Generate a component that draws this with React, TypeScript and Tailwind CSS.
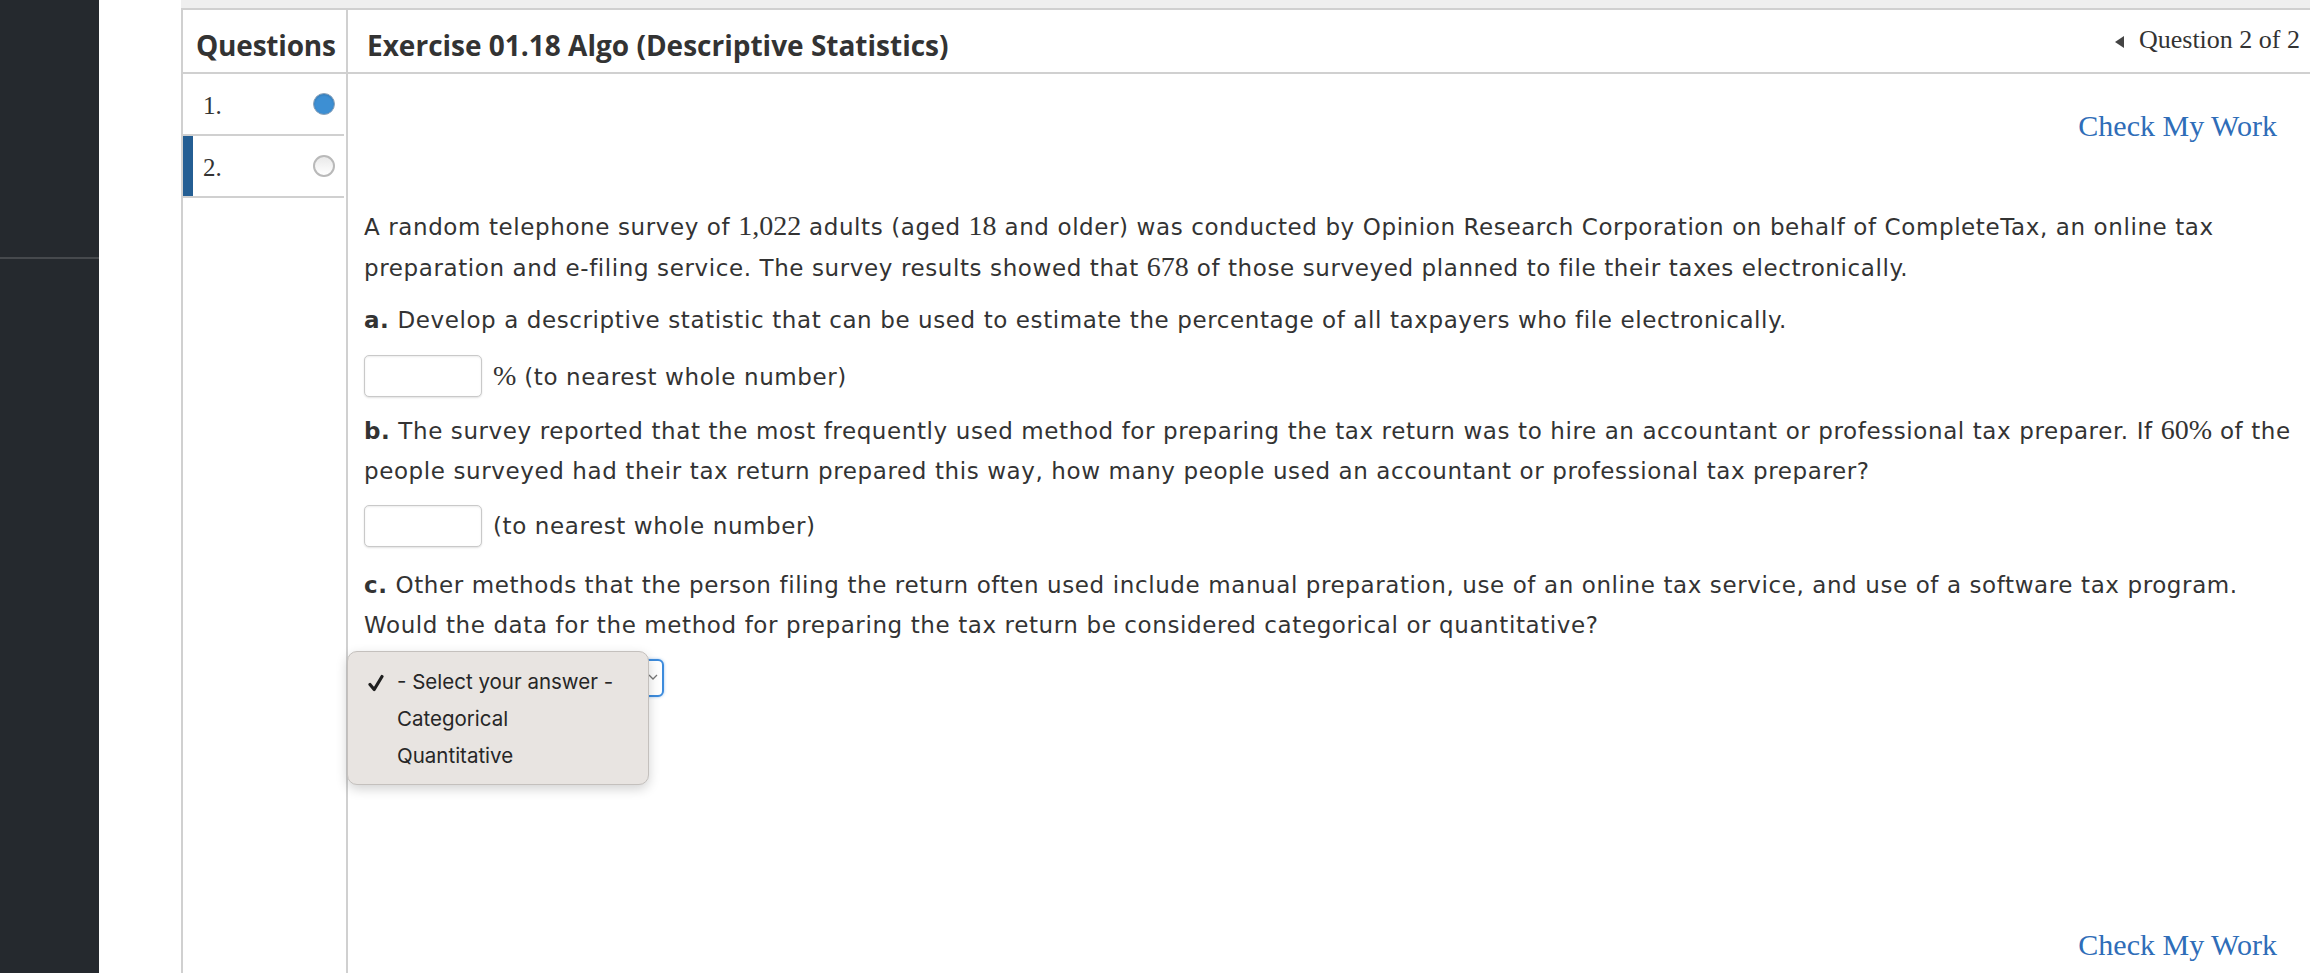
import React from "react";

const BODY = "font-['DejaVu_Sans',Verdana,sans-serif] text-[23px] tracking-[0.6px] leading-[40px] text-[#333]";
const MATH = "font-['Liberation_Serif',serif] text-[28px] tracking-normal";

function M({ children }: { children: React.ReactNode }) {
  return <span className={MATH}>{children}</span>;
}

function AnswerBox() {
  return (
    <div className="w-[118px] h-[42px] rounded-[5px] border border-[#c9c9c9] bg-white shadow-[inset_0_1px_2px_rgba(0,0,0,0.08),0_1px_2px_rgba(0,0,0,0.12)]" />
  );
}

function QuestionRow({ num, done, active }: { num: number; done: boolean; active: boolean }) {
  return (
    <div className="relative flex items-center justify-between h-[62px] mr-[2px] pl-[20px] pr-[9px] border-b-2 border-[#d0d0d0]">
      {active && <div className="absolute left-0 top-0 bottom-0 w-[10px] bg-[#245e93]" />}
      <span className="font-['Liberation_Serif',serif] text-[25px] text-[#333] pt-[3px]">{num}.</span>
      {done ? (
        <span className="w-[22px] h-[22px] rounded-full bg-[#3d8fd3] border border-[#8fa3b8] shadow-[inset_0_1px_2px_rgba(0,0,0,0.15)]" />
      ) : (
        <span className="w-[22px] h-[22px] rounded-full bg-gradient-to-b from-[#e9e9e9] to-white border-2 border-[#b9b9b9]" />
      )}
    </div>
  );
}

function CheckMyWork() {
  return (
    <div className="flex justify-end pr-[23px]">
      <a className="font-['Liberation_Serif',serif] text-[30px] leading-[32px] text-[#2f6db8] cursor-pointer">
        Check My Work
      </a>
    </div>
  );
}

export default function App() {
  return (
    <div className="flex w-[2310px] h-[973px] overflow-hidden bg-white">
      {/* left app rail */}
      <div className="w-[99px] shrink-0 bg-[#25292e]">
        <div className="h-[259px] border-b-2 border-[#46494d]" />
      </div>
      <div className="w-[82px] shrink-0" />

      {/* assignment panel */}
      <div className="flex-1 flex flex-col min-w-0">
        <div className="h-[8px] bg-[#efefef]" />
        <div className="flex-1 flex flex-col border-t-2 border-l-2 border-[#d0d0d0]">
          {/* header */}
          <div className="flex h-[64px] border-b-2 border-[#d0d0d0] font-['Open_Sans',sans-serif] font-bold text-[28px] leading-[38px] text-[#333]">
            <div className="w-[165px] shrink-0 border-r-2 border-[#d0d0d0] pl-[13px] pt-[16px] tracking-[-0.2px]">
              Questions
            </div>
            <div className="flex-1 flex justify-between pl-[19px] pr-[10px]">
              <div className="pt-[16px]">Exercise 01.18 Algo (Descriptive Statistics)</div>
              <div className="flex items-center gap-[14px] pb-[2px] font-['Liberation_Serif',serif] font-normal text-[26px] leading-[30px] text-[#333]">
                <svg width="10" height="12" viewBox="0 0 10 12" className="mt-[4px]">
                  <path d="M9 0 L9 12 L0 6 Z" fill="#444" />
                </svg>
                <span>Question 2 of 2</span>
              </div>
            </div>
          </div>

          <div className="flex-1 flex">
            {/* question list */}
            <div className="w-[165px] shrink-0 border-r-2 border-[#d0d0d0]">
              <QuestionRow num={1} done active={false} />
              <QuestionRow num={2} done={false} active />
            </div>

            {/* question body */}
            <div className="flex-1 min-w-0 pt-[36px] pl-[16px] pr-[10px]">
              <CheckMyWork />

              <div className={`${BODY} mt-[64px]`}>
                <p className="whitespace-nowrap">
                  A random telephone survey of <M>1,022</M> adults (aged <M>18</M> and older) was conducted by Opinion
                  Research Corporation on behalf of CompleteTax, an online tax
                  <br />
                  preparation and e-filing service. The survey results showed that <M>678</M> of those surveyed planned
                  to file their taxes electronically.
                </p>

                <p className="mt-[12px] whitespace-nowrap">
                  <b>a.</b> Develop a descriptive statistic that can be used to estimate the percentage of all taxpayers
                  who file electronically.
                </p>
                <div className="mt-[15px] flex items-center gap-[11px]">
                  <AnswerBox />
                  <span>
                    <M>%</M> (to nearest whole number)
                  </span>
                </div>

                <p className="mt-[13px] whitespace-nowrap">
                  <b>b.</b> The survey reported that the most frequently used method for preparing the tax return was to
                  hire an accountant or professional tax preparer. If <M>60%</M> of the
                  <br />
                  people surveyed had their tax return prepared this way, how many people used an accountant or
                  professional tax preparer?
                </p>
                <div className="mt-[14px] flex items-center gap-[11px]">
                  <AnswerBox />
                  <span>(to nearest whole number)</span>
                </div>

                <p className="mt-[18px] whitespace-nowrap">
                  <b>c.</b> Other methods that the person filing the return often used include manual preparation, use of
                  an online tax service, and use of a software tax program.
                  <br />
                  Would the data for the method for preparing the tax return be considered categorical or quantitative?
                </p>

                <div className="relative mt-[14px] w-[300px] h-[38px]">
                  <div className="absolute inset-0 rounded-[6px] border-2 border-[#3d8bdc] bg-white shadow-[0_0_3px_rgba(61,139,220,0.5)]">
                    <svg width="10" height="8" viewBox="0 0 10 8" className="absolute right-[4px] top-[12px]">
                      <path d="M1 2 L5 6 L9 2" fill="none" stroke="#777" strokeWidth="1.3" />
                    </svg>
                  </div>

                  {/* native select popup */}
                  <div className="absolute -top-[8px] -left-[17px] w-[302px] h-[134px] rounded-[10px] border border-[#c4c0bd] bg-[#e8e4e1] shadow-[0_4px_12px_rgba(0,0,0,0.18)] pt-[12px] font-['Inter',sans-serif] text-[20.5px] tracking-normal leading-normal text-[#262626]">
                    <div className="flex items-center h-[37px] pl-[20px]">
                      <svg width="16" height="18" viewBox="0 0 16 18" className="mr-[13px]">
                        <path
                          d="M2 10.5 L6.2 15.5 L14 2.5"
                          fill="none"
                          stroke="#1f1f1f"
                          strokeWidth="3.2"
                          strokeLinecap="round"
                          strokeLinejoin="round"
                        />
                      </svg>
                      <span>- Select your answer -</span>
                    </div>
                    <div className="flex items-center h-[37px] pl-[49px]">Categorical</div>
                    <div className="flex items-center h-[37px] pl-[49px]">Quantitative</div>
                  </div>
                </div>
              </div>

              <div className="mt-[232px]">
                <CheckMyWork />
              </div>
            </div>
          </div>
        </div>
      </div>
    </div>
  );
}
